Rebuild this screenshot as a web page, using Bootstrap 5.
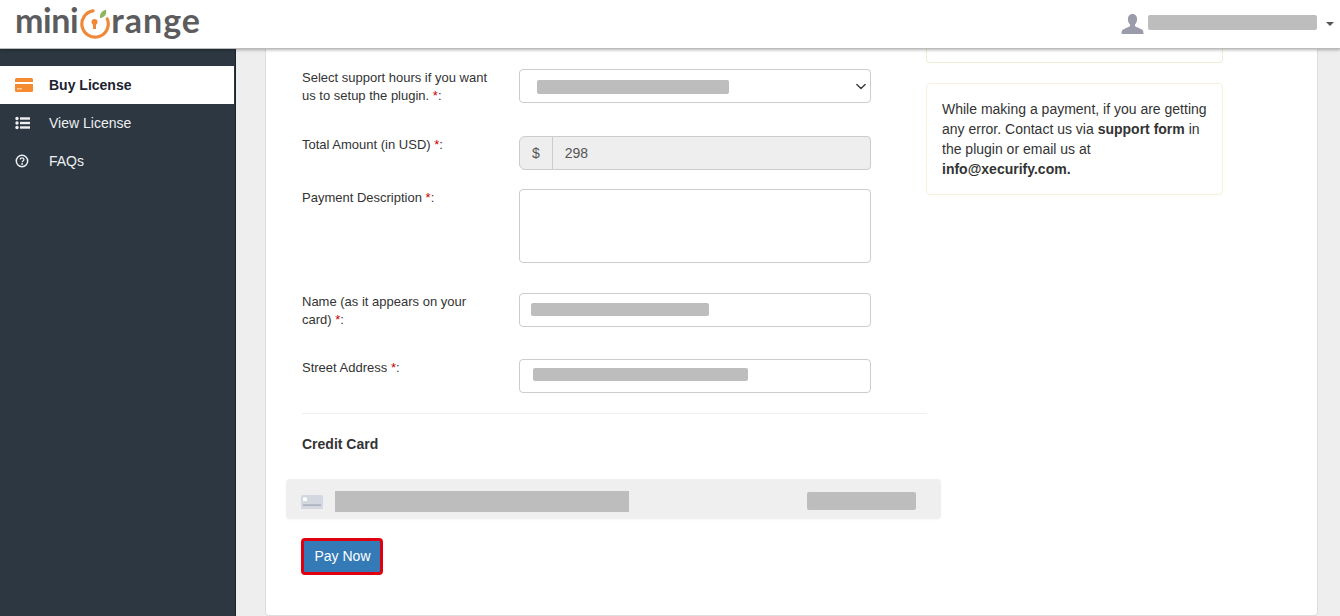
<!DOCTYPE html>
<html lang="en">
<head>
<meta charset="utf-8">
<title>Buy License</title>
<link href="https://cdn.jsdelivr.net/npm/bootstrap@5.3.0/dist/css/bootstrap.min.css" rel="stylesheet">
<style>
html,body{height:616px;overflow:hidden}
body{font-family:"Liberation Sans",Arial,sans-serif;font-size:14px;color:#333;background:#eee}
.top-bar{height:49px;background:#fff;border-bottom:1px solid #bbb;box-shadow:0 1px 3px rgba(0,0,0,.3);position:relative;z-index:3;padding:0 6px 0 15px}
.logo-word{font-family:Lato,sans-serif;font-weight:700;font-size:34px;line-height:1;color:#5c5c5e;margin-top:-9px}
.logo-word.tail{letter-spacing:1px}
.logo-word.head{letter-spacing:-.4px}
.logo-ring{width:30px;height:30px;margin:0 1px 0 2px;flex:none}
.redact{display:block;background:#bdbdbd;border-radius:2px;position:absolute}
.user-wrap{position:relative;width:178px;height:20px}
.shell{height:567px}
.side-nav{width:236px;background:#2c3741;border-right:1px solid #1d242b;padding-top:17px;flex:none}
.side-link{display:flex;align-items:center;height:38px;color:#eef0f2;font-size:14px;text-decoration:none;padding-left:15px}
.side-link svg{width:18px;height:14px;margin-right:16px;flex:none}
.side-link.on{background:#fff;color:#1c2230;font-weight:700;margin-right:1px}
.main-area{flex:1;padding:0 22px 0 29px;min-width:0}
.sheet{background:#fff;border:1px solid #ddd;border-top:0;border-radius:0 0 4px 4px;height:567px;padding:0 95px 0 36px}
.form-col{width:625px;padding-top:20px;flex:none}
.aside-col{width:297px;margin-left:-1px;flex:none}
.field-row{display:flex;align-items:flex-start;position:relative}
.field-label{width:217px;flex:none;padding-right:25px;font-size:13px;line-height:18px;color:#333}
.req{color:#c00}
.field-box{width:352px;position:relative}
.form-control.ctl,.form-select.ctl{height:34px;font-size:14px;border-color:#ccc;border-radius:4px;padding:6px 12px;box-shadow:none}
.form-select.ctl{background-position:right 2px center;background-size:14px 11px}
.input-group-text.ctl-add{background:#eee;border-color:#ccc;color:#555;font-size:14px;padding:6px 12px;height:34px}
.form-control.ctl[disabled]{background:#eee;color:#555}
textarea.form-control.ctl-area{height:74px;border-color:#ccc;border-radius:4px;resize:none}
.after-a{margin-bottom:31px}.after-b{margin-bottom:19px}.after-c{margin-bottom:30px}
.rule{border:0;border-top:1px solid #eee;margin:20px 0;opacity:1}
.cc-title{font-size:14px;font-weight:700;line-height:20px;margin:0 0 25px;color:#333}
.cc-strip{height:40px;background:#efefef;border-radius:4px;margin:0 -14px 19px -16px;position:relative;box-shadow:0 1px 2px rgba(0,0,0,.04)}
.cc-icon{position:absolute;left:15px;top:16px;width:22px;height:14px}
.pay-btn{background:#337ab7;color:#fff;border:3px solid #e0000f;border-radius:4px;font-size:14px;height:37px;width:82px;padding:0 0 0 1px;margin-left:-1px}
.pay-btn:hover{background:#337ab7;color:#fff;border-color:#e0000f}
.note-card{background:#fff;border:1px solid #f7f0dd;border-radius:4px;padding:15px;line-height:20px;font-size:14px;color:#333}
.note-stub{height:14px;border-top:0;border-radius:0 0 4px 4px;padding:0;margin-bottom:20px;border-color:#efecd8}
.note-main{height:112px}
.note-main p{margin:0}
.note-main b{font-weight:700}
</style>
</head>
<body>
<header class="top-bar d-flex align-items-center justify-content-between">
  <div class="d-flex align-items-center">
    <span class="logo-word head">mini</span>
    <svg class="logo-ring" viewBox="0 0 30 30" aria-hidden="true">
      <path d="M13 1.900 A13.200 13.200 0 1 0 27.300 10" fill="none" stroke="#f0883a" stroke-width="3.200" stroke-linecap="round"/>
      <circle cx="14.500" cy="13" r="3" fill="#f0883a"/>
      <rect x="13" y="13.500" width="3" height="6.500" fill="#f0883a"/>
      <path d="M20 9 C19.500 5 21.500 2 26 .8 C27 5 25 8.500 20 9Z" fill="#8cb65a"/>
    </svg>
    <span class="logo-word tail">range</span>
  </div>
  <div class="d-flex align-items-center">
    <svg width="23" height="20" viewBox="0 0 23 20" aria-hidden="true"><path d="M11.500 0c3 0 4.600 2.300 4.600 5.200 0 2.200-.9 4.100-2.100 5.300v1.700c1.700 1 5 2 7 3.300 1 .7 1.500 2 1.500 4.500H.5c0-2.500.5-3.800 1.500-4.500 2-1.300 5.300-2.300 7-3.300v-1.700C7.800 9.300 6.900 7.400 6.900 5.200 6.900 2.300 8.500 0 11.500 0z" fill="#9a9cab"/></svg>
    <div class="user-wrap ms-1"><span class="redact" style="left:0;top:1px;width:169px;height:15px"></span></div>
    <svg width="8" height="4" viewBox="0 0 8 4" aria-hidden="true"><path d="M0 0h8L4 4z" fill="#555"/></svg>
  </div>
</header>
<div class="shell d-flex">
  <nav class="side-nav">
    <a class="side-link on" href="#"><svg viewBox="0 0 18 14" aria-hidden="true"><rect x="0" y="0" width="18" height="14" rx="1.500" fill="#f58a2e"/><rect x="0" y="4" width="18" height="2" fill="#fff"/><rect x="2" y="10.500" width="5" height=".8" fill="#fff"/></svg>Buy License</a>
    <a class="side-link" href="#"><svg viewBox="0 0 18 14" aria-hidden="true"><g fill="#eef0f2"><circle cx="2" cy="2.500" r="1.700"/><circle cx="2" cy="7" r="1.700"/><circle cx="2" cy="11.500" r="1.700"/><rect x="5" y="1.300" width="10" height="2.400"/><rect x="5" y="5.800" width="10" height="2.400"/><rect x="5" y="10.300" width="10" height="2.400"/></g></svg>View License</a>
    <a class="side-link" href="#"><svg viewBox="0 0 18 14" aria-hidden="true"><circle cx="7" cy="7" r="5.700" fill="none" stroke="#eef0f2" stroke-width="1.500"/><path d="M5.200 5.600c0-2.300 3.700-2.300 3.700-.1 0 1.400-1.800 1.400-1.800 2.800" fill="none" stroke="#eef0f2" stroke-width="1.300"/><circle cx="7.100" cy="10" r=".9" fill="#eef0f2"/></svg>FAQs</a>
  </nav>
  <main class="main-area">
    <div class="sheet d-flex">
      <div class="form-col">
        <div class="field-row after-a">
          <label class="field-label">Select support hours if you want us to setup the plugin. <span class="req">*</span>:</label>
          <div class="field-box">
            <select class="form-select ctl"><option></option></select>
            <span class="redact" style="left:18px;top:11px;width:192px;height:14px"></span>
          </div>
        </div>
        <div class="field-row after-b">
          <label class="field-label">Total Amount (in USD) <span class="req">*</span>:</label>
          <div class="field-box">
            <div class="input-group">
              <span class="input-group-text ctl-add">$</span>
              <input class="form-control ctl" disabled value="298">
            </div>
          </div>
        </div>
        <div class="field-row after-c">
          <label class="field-label">Payment Description <span class="req">*</span>:</label>
          <div class="field-box"><textarea class="form-control ctl-area"></textarea></div>
        </div>
        <div class="field-row after-c">
          <label class="field-label">Name (as it appears on your card) <span class="req">*</span>:</label>
          <div class="field-box">
            <input class="form-control ctl">
            <span class="redact" style="left:12px;top:10px;width:178px;height:13px"></span>
          </div>
        </div>
        <div class="field-row">
          <label class="field-label">Street Address <span class="req">*</span>:</label>
          <div class="field-box">
            <input class="form-control ctl">
            <span class="redact" style="left:14px;top:9px;width:215px;height:13px"></span>
          </div>
        </div>
        <hr class="rule">
        <h2 class="cc-title">Credit Card</h2>
        <div class="cc-strip">
          <svg class="cc-icon" viewBox="0 0 22 14" aria-hidden="true"><rect width="22" height="14" rx="1.500" fill="#d3d7e0"/><rect x="2" y="2.500" width="4" height="3.500" fill="#fff"/><rect x="2" y="9.500" width="18" height="1.200" fill="#9ea4b3"/></svg>
          <span class="redact" style="left:49px;top:12px;width:294px;height:21px;border-radius:0"></span>
          <span class="redact" style="left:521px;top:13px;width:109px;height:18px"></span>
        </div>
        <button class="btn pay-btn" type="button">Pay Now</button>
      </div>
      <aside class="aside-col">
        <div class="note-card note-stub"></div>
        <div class="note-card note-main">
          <p>While making a payment, if you are getting any error. Contact us via <b>support form</b> in the plugin or email us at <b>info@xecurify.com.</b></p>
        </div>
      </aside>
    </div>
  </main>
</div>
<script src="https://cdn.jsdelivr.net/npm/bootstrap@5.3.0/dist/js/bootstrap.bundle.min.js"></script>
</body>
</html>
